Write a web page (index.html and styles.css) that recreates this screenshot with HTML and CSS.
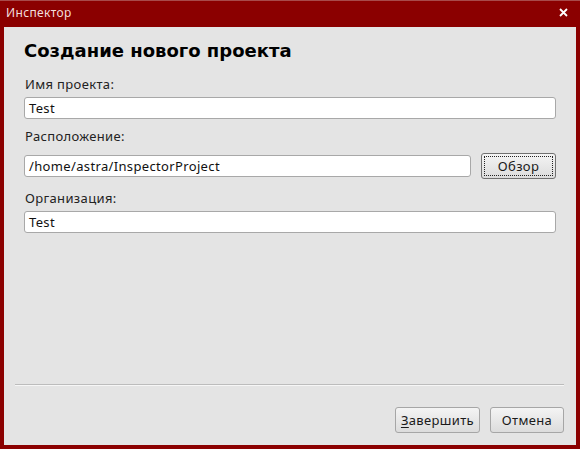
FILE: index.html
```html
<!DOCTYPE html>
<html lang="ru">
<head>
<meta charset="utf-8">
<title>Инспектор</title>
<link rel="stylesheet" href="styles.css">
</head>
<body>
<div class="window">
  <div class="titlebar">
    <span class="title">Инспектор</span>
    <svg class="close" width="9" height="9" viewBox="0 0 9 9"><path d="M1 1 L8 8 M8 1 L1 8" stroke="#fff" stroke-width="1.8"/></svg>
  </div>
  <div class="content">
    <h1 class="heading">Создание нового проекта</h1>
    <label class="label label-first">Имя проекта:</label>
    <div class="input">Test</div>
    <label class="label label-second">Расположение:</label>
    <div class="row">
      <div class="input input-grow">/home/astra/InspectorProject</div>
      <button class="btn btn-focus"><span class="focus-ring">Обзор</span></button>
    </div>
    <label class="label label-third">Организация:</label>
    <div class="input">Test</div>
    <div class="spacer"></div>
    <div class="separator"></div>
    <div class="actions">
      <button class="btn btn-finish"><u>З</u>авершить</button>
      <button class="btn btn-cancel">Отмена</button>
    </div>
  </div>
</div>
</body>
</html>
```
FILE: styles.css
```css
* { box-sizing: border-box; }
html, body { margin: 0; padding: 0; }
body {
  width: 580px;
  height: 449px;
  font-family: "Noto Sans", "Open Sans", sans-serif;
  font-size: 13px;
  letter-spacing: 0.35px;
  color: #1a1a1a;
  overflow: hidden;
}
.window {
  width: 580px;
  height: 449px;
  background: #8b0000;
  border-top: 1px solid #a84a4a;
  padding: 0 4px 4px 4px;
  display: flex;
  flex-direction: column;
}
.titlebar {
  height: 26px;
  display: flex;
  align-items: center;
  justify-content: space-between;
  padding: 0 8px 0 2px;
}
.title {
  color: #f3dede;
  font-size: 12px;
  line-height: 14px;
  margin-top: -2px;
}
.close { margin-top: -3px; }
.content {
  flex: 1;
  background: #e4e4e4;
  display: flex;
  flex-direction: column;
  padding: 12px 20px 12px 20px;
}
.heading {
  margin: 0;
  font-family: "DejaVu Sans", "Noto Sans", sans-serif;
  font-size: 18px;
  line-height: 24px;
  font-weight: 700;
  letter-spacing: 0;
  color: #000;
}
.label {
  display: block;
  line-height: 17px;
  color: #222;
  padding-left: 1px;
}
.label-first { margin-top: 13px; margin-bottom: 4px; }
.label-second { margin-top: 9px; margin-bottom: 8px; }
.label-third { margin-top: 11px; margin-bottom: 4px; }
.input {
  height: 22px;
  background: #fff;
  border: 1px solid #a8a8a8;
  border-radius: 3px;
  padding: 0 4px;
  line-height: 20px;
  color: #111;
}
.row {
  display: flex;
  align-items: center;
  gap: 10px;
  height: 26px;
}
.input-grow { flex: 1; }
.btn {
  font-family: inherit;
  font-size: 13px;
  letter-spacing: 0.35px;
  color: #1a1a1a;
  height: 26px;
  padding: 0;
  background: linear-gradient(#f4f4f4, #dcdcdc);
  border: 1px solid #a6a6a6;
  border-radius: 3px;
}
.btn-focus {
  width: 75px;
  border-color: #707070;
  padding: 2px;
}
.focus-ring {
  display: block;
  height: 100%;
  border: 1px dotted #222;
  line-height: 18px;
}
.spacer { flex: 1; }
.separator {
  margin: 0 -8px 0 -9px;
  border-top: 1px solid #bcbcbc;
  border-bottom: 1px solid #f6f6f6;
}
.actions {
  display: flex;
  justify-content: flex-end;
  gap: 10px;
  margin: 21px -8px 0 0;
}
.btn-finish { width: 85px; }
.btn-cancel { width: 74px; }
.btn u { text-decoration-thickness: 1px; text-underline-offset: 2px; }
```
